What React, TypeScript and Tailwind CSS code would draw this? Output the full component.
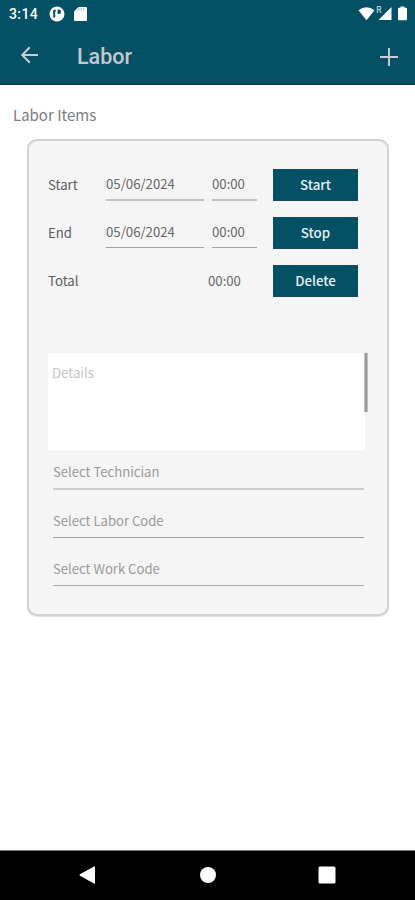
import type { ReactNode } from "react";

function StatusBar() {
  return (
    <div className="flex h-7 items-center pb-px pl-[9px] pr-[7px] text-white">
      <span className="w-[40px] pt-px font-['Roboto'] text-[14px] font-medium leading-none tracking-[0.4px]">3:14</span>
      <svg className="h-4 w-4" viewBox="0 0 16 16">
        <circle cx="8" cy="8" r="7.5" fill="#fff" />
        <path d="M5.2 4v7.5M5.2 4.6h1.6" fill="none" stroke="#045064" strokeWidth="2" />
        <path d="M8.6 3.6h1.2a2.2 2.2 0 0 1 0 4.4H8.6z" fill="#045064" />
      </svg>
      <svg className="ml-[9px] h-[14px] w-[13px]" viewBox="0 0 13 14">
        <path d="M4.5 0H12a1 1 0 0 1 1 1v12a1 1 0 0 1-1 1H1a1 1 0 0 1-1-1V4.5z" fill="#fff" />
        <path d="M4.8 1.3v2.3M7.3 1.3v2.3M9.8 1.3v2.3" stroke="#a9bfc5" strokeWidth="1.4" />
      </svg>
      <svg className="ml-auto h-4 w-[50px]" viewBox="0 0 50 16">
        <path d="M0.5 4.2Q8.5 -1.6 16.5 4.2L8.5 14.2z" fill="#fff" />
        <path d="M33.5 1v13H20.5z" fill="#fff" />
        <text x="18.3" y="7" fontFamily="Roboto" fontSize="8.5" fontWeight="500" fill="#b9cdd2">R</text>
        <path d="M42.5 0.5h4v1.2h1.6a.9.9 0 0 1 .9.9v10.7a.9.9 0 0 1-.9.9h-7.2a.9.9 0 0 1-.9-.9V2.6a.9.9 0 0 1 .9-.9h1.6z" fill="#fff" />
      </svg>
    </div>
  );
}

function Field({ className, children }: { className: string; children: ReactNode }) {
  return <div className={`pt-[5px] leading-5 text-[#686868] ${className}`}>{children}</div>;
}

function ActionButton({ children }: { children: ReactNode }) {
  return (
    <button className="ml-auto flex h-8 w-[85px] items-center justify-center border-y border-[#1d4662] bg-[#045064] pb-px text-[13.3px] font-medium leading-5 text-[#e8f0f2]">
      {children}
    </button>
  );
}

function TimeRow({ label, action, line }: { label: string; action: string; line: string }) {
  return (
    <div className="flex h-8 items-start">
      <span className="w-[58px] pt-[6px] leading-5 text-[#5c5c5c]">{label}</span>
      <Field className={`w-[98px] ${line}`}>05/06/2024</Field>
      <Field className={`ml-2 w-[45px] ${line}`}>00:00</Field>
      <ActionButton>{action}</ActionButton>
    </div>
  );
}

function SelectField({ border, children }: { border: string; children: ReactNode }) {
  return <div className={`pt-[20px] text-[13.1px] leading-5 text-[#9a9a9a] ${border}`}>{children}</div>;
}

export default function App() {
  return (
    <div className="flex h-[900px] w-[415px] flex-col bg-white font-['Noto_Sans_CJK_SC',sans-serif] text-[13.2px]">
      <header className="h-[85px] border-b border-[#1b2f58] bg-[#045064]">
        <StatusBar />
        <div className="flex h-14 items-center pl-[20px] pr-[16px]">
          <svg className="-mt-[2px] h-[18px] w-[19px]" viewBox="0 0 19 18" fill="none" stroke="#c9cdd1" strokeWidth="2">
            <path d="M18 9H2.4M9.8 1.2 2.2 9l7.6 7.8" />
          </svg>
          <h1 className="ml-[38px] pt-px font-['Roboto'] text-[21.5px] font-medium leading-7 text-[#c5c9cc]">Labor</h1>
          <svg className="ml-auto mt-[2px] h-5 w-5" viewBox="0 0 20 20" stroke="#c9cdd1" strokeWidth="1.9">
            <path d="M10 1v18M1 10h18" />
          </svg>
        </div>
      </header>
      <main className="flex-1">
        <h2 className="ml-[13px] mt-[18px] text-[15px] leading-6 text-[#7d7d7d]">Labor Items</h2>
        <section className="ml-[27px] mt-[12px] h-[477px] w-[362px] rounded-[10px] border-2 border-[#d2d2d2] bg-[#f5f5f5] pl-[19px] pt-[28px] shadow-[0_1px_1px_#e3e3e3]">
          <div className="flex w-[310px] flex-col gap-4">
            <TimeRow label="Start" action="Start" line="h-8 border-b-2 border-[#c2c2c2]" />
            <TimeRow label="End" action="Stop" line="h-[31px] border-b border-[#a2a2a2]" />
            <div className="flex h-8 leading-5 text-[#5c5c5c]">
              <span className="w-[160px] pt-[6px]">Total</span>
              <span className="pt-[6px] text-[#686868]">00:00</span>
              <ActionButton>Delete</ActionButton>
            </div>
          </div>
          <div className="mt-[56px] flex h-[97px] w-[320px]">
            <div className="w-[317px] bg-white pl-[4px] pt-[10px] leading-5 text-[#c5c5c5]">Details</div>
            <div className="-ml-px h-[59px] w-[4px] border-x border-[#c2c2c2] bg-[#999999]" />
          </div>
          <div className="-mt-[8px] ml-[5px] w-[311px]">
            <SelectField border="h-12 border-b-2 border-[#cccccc]">Select Technician</SelectField>
            <SelectField border="h-12 border-b border-[#a0a0a0] pt-[21px]">Select Labor Code</SelectField>
            <SelectField border="h-12 border-b border-[#ababab] pt-[21px]">Select Work Code</SelectField>
          </div>
        </section>
      </main>
      <nav className="flex h-[50px] items-center border-t border-[#777777] bg-black pl-[79px] pr-[79px]">
        <svg className="-mt-px h-[18px] w-[257px]" viewBox="0 0 257 18" fill="#fff">
          <path d="M15 .5a.7.7 0 0 1 1 .6v15.8a.7.7 0 0 1-1 .6L1 9.7a.8.8 0 0 1 0-1.4z" />
          <circle cx="129" cy="9" r="8" />
          <rect x="239.5" y="0.5" width="17" height="17" rx="1.5" />
        </svg>
      </nav>
    </div>
  );
}
